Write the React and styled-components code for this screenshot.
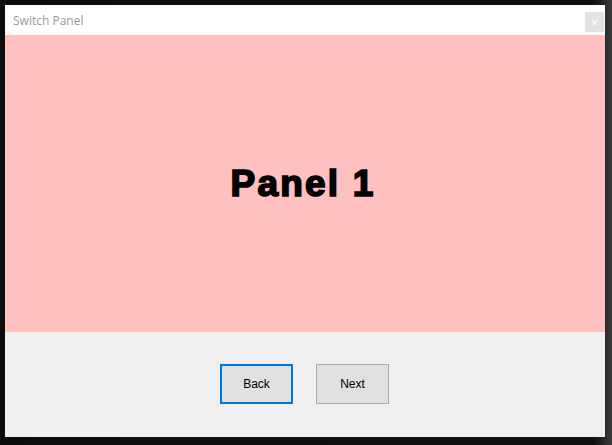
import * as React from 'react'
import styled, { createGlobalStyle } from 'styled-components'

const GlobalStyle = createGlobalStyle`
  html, body {
    margin: 0;
    height: 100%;
  }
  body {
    background: linear-gradient(90deg, #0c0c0c 0%, #101010 97%, #2e2e2e 99%, #3a3a3a 100%);
    padding: 5px;
    box-sizing: border-box;
    overflow: hidden;
  }
`

const Window = styled.div`
  width: 600px;
  height: 432px;
  display: flex;
  flex-direction: column;
  background: #f0f0f0;
`

const TitleBar = styled.div`
  height: 30px;
  flex: none;
  display: flex;
  align-items: center;
  justify-content: space-between;
  background: #ffffff;
  padding: 0 1px 0 8px;
`

const Title = styled.span`
  font-family: 'Open Sans', 'Noto Sans', sans-serif;
  font-size: 12px;
  color: #9a96a0;
  margin-top: 1px;
`

const CloseButton = styled.div`
  width: 19px;
  height: 20px;
  margin-top: 4px;
  background: #e3e3e3;
  display: flex;
  align-items: center;
  justify-content: center;
  color: #f8f8f8;
  font-family: 'DejaVu Sans', sans-serif;
  font-size: 10px;
  font-weight: bold;
`

const Panel = styled.div`
  height: 297px;
  flex: none;
  background: #ffc0c0;
  display: flex;
  align-items: center;
  justify-content: center;
`

const PanelTitle = styled.h1`
  margin: 0 4px 0 0;
  font-family: 'Liberation Sans', Arial, sans-serif;
  font-weight: 700;
  font-size: 37px;
  letter-spacing: 2.2px;
  -webkit-text-stroke: 1.7px #000;
  color: #000;
`

const Footer = styled.div`
  flex: 1;
  display: flex;
  align-items: center;
  justify-content: center;
  gap: 23px;
  padding: 0 1px 2px 0;
`

const Button = styled.button`
  box-sizing: border-box;
  width: 73px;
  height: 40px;
  padding: 0;
  background: #e1e1e1;
  border: ${({ focused }) => (focused ? '2px solid #0078d7' : '1px solid #adadad')};
  font-family: 'Liberation Sans', Arial, sans-serif;
  font-size: 12px;
  color: #000;
`

const App = () => (
  <>
    <GlobalStyle />
    <Window>
      <TitleBar>
        <Title>Switch Panel</Title>
        <CloseButton>×</CloseButton>
      </TitleBar>
      <Panel>
        <PanelTitle>Panel 1</PanelTitle>
      </Panel>
      <Footer>
        <Button focused>Back</Button>
        <Button>Next</Button>
      </Footer>
    </Window>
  </>
)

export default App
